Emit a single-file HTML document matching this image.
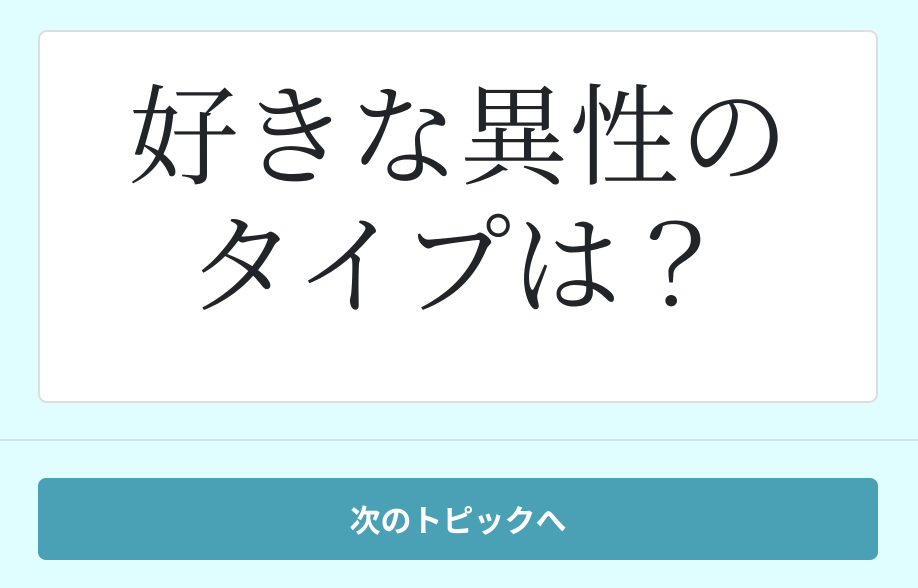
<!DOCTYPE html>
<html><head><meta charset="utf-8"><style>
html,body{margin:0;padding:0;}
body{width:918px;height:588px;background:#e0fdff;position:relative;overflow:hidden;}
.card{position:absolute;left:38px;top:30px;width:836px;height:369px;background:#fff;border:2px solid #dedede;border-radius:9px;}
.t{position:absolute;left:0;top:65px;width:918px;text-align:center;font-family:"Noto Serif CJK JP","Noto Serif CJK SC",serif;font-size:110px;line-height:129px;color:#212529;}
.hr{position:absolute;left:0;top:439px;width:918px;height:2px;background:#cfe3e6;}
.btn{position:absolute;left:38px;top:478px;width:840px;height:82px;background:#4aa0b5;border-radius:8px;color:#fff;font-family:"Noto Sans CJK JP",sans-serif;font-size:31px;font-weight:bold;text-align:center;line-height:82px;}
</style></head><body>
<div class="card"></div>
<div class="t">好きな異性の<br>タイプは？</div>
<div class="hr"></div>
<div class="btn">次のトピックへ</div>
</body></html>
